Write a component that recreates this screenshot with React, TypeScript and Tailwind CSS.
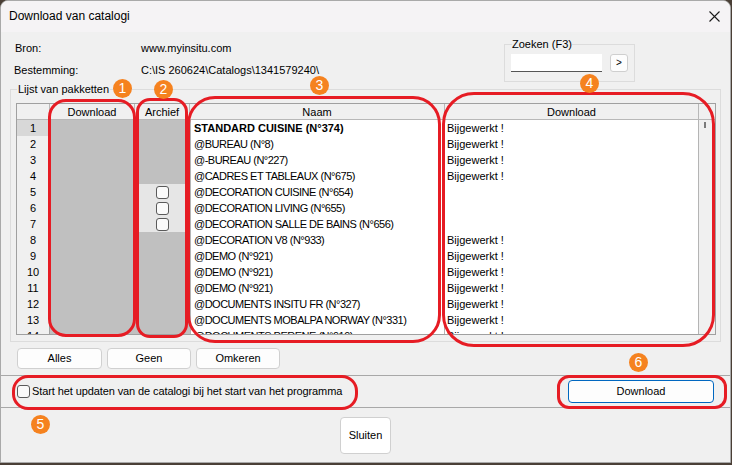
import React from 'react';

interface Pakket {
  name: string;
  bold?: boolean;
  updated: boolean;
  archive?: boolean;
}

const pakketten: Pakket[] = [
  { name: 'STANDARD CUISINE (N°374)', bold: true, updated: true },
  { name: '@BUREAU (N°8)', updated: true },
  { name: '@-BUREAU (N°227)', updated: true },
  { name: '@CADRES ET TABLEAUX (N°675)', updated: true },
  { name: '@DECORATION CUISINE (N°654)', updated: false, archive: true },
  { name: '@DECORATION LIVING (N°655)', updated: false, archive: true },
  { name: '@DECORATION SALLE DE BAINS (N°656)', updated: false, archive: true },
  { name: '@DECORATION V8 (N°933)', updated: true },
  { name: '@DEMO (N°921)', updated: true },
  { name: '@DEMO (N°921)', updated: true },
  { name: '@DEMO (N°921)', updated: true },
  { name: '@DOCUMENTS INSITU FR (N°327)', updated: true },
  { name: '@DOCUMENTS MOBALPA NORWAY (N°331)', updated: true },
  { name: '@DOCUMENTS PERENE (N°919)', updated: true },
];

// rode kaders + oranje nummers (annotaties bovenop de dialoog)
const frames = [
  'left-[48px] top-[99px] w-[88px] h-[238px] rounded-[18px]',
  'left-[136px] top-[98px] w-[52px] h-[240px] rounded-[14px]',
  'left-[187px] top-[96px] w-[254px] h-[247px] rounded-[28px]',
  'left-[442px] top-[92px] w-[273px] h-[255px] rounded-[32px]',
  'left-[12px] top-[375px] w-[346px] h-[35px] rounded-[16px]',
  'left-[557px] top-[375px] w-[170px] h-[34px] rounded-[12px]',
];

const badges = [
  { n: 1, cls: 'left-[113px] top-[79px]' },
  { n: 2, cls: 'left-[154px] top-[80px]' },
  { n: 3, cls: 'left-[310px] top-[76px]' },
  { n: 4, cls: 'left-[580px] top-[74px]' },
  { n: 5, cls: 'left-[31px] top-[415px]' },
  { n: 6, cls: 'left-[629px] top-[353px]' },
];

function WinButton({ label, className = '' }: { label: string; className?: string }) {
  return (
    <button className={`bg-[#fdfdfd] border border-[#d0d0d0] rounded-[4px] text-[11px] text-black flex items-center justify-center ${className}`}>
      {label}
    </button>
  );
}

export default function App() {
  return (
    <div className="relative w-[732px] h-[465px] bg-[#4a3f36] overflow-hidden font-['Liberation_Sans',Arial,sans-serif] text-black">
      <div className="w-[731px] h-[463px] bg-[#f0f0f0] border border-[#a9a9a9] rounded-t-[8px] flex flex-col overflow-hidden">
        {/* titelbalk */}
        <div className="h-[31px] bg-[#f5f3f5] flex items-center justify-between pl-[8px] pr-[9px] shrink-0">
          <span className="text-[12px] -mt-[1px]">Download van catalogi</span>
          <svg width="11" height="11" viewBox="0 0 11 11" className="mr-[1px]">
            <path d="M0.5 0.5 L10.5 10.5 M10.5 0.5 L0.5 10.5" stroke="#1a1a1a" strokeWidth="1.1" />
          </svg>
        </div>

        {/* bron / bestemming + zoeken */}
        <div className="h-[50px] flex shrink-0">
          <div className="pl-[13px] pt-[6px] grid grid-cols-[127px_auto] text-[11px] leading-[21px]">
            <span className="pl-[1px]">Bron:</span>
            <span>www.myinsitu.com</span>
            <span>Bestemming:</span>
            <span>C:\IS 260624\Catalogs\1341579240\</span>
          </div>
          <fieldset className="ml-auto mr-[95px] mt-[5px] w-[131px] h-[45px] border border-[#dcdcdc] pl-[6px]">
            <legend className="ml-[1px] px-0 text-[11px] leading-[14px]">Zoeken (F3)</legend>
            <div className="flex items-center gap-[8px] pt-[3px]">
              <div className="w-[91px] h-[18px] bg-white border-b border-[#555]" />
              <button className="w-[18px] h-[18px] bg-[#fdfdfd] border border-[#cfcfcf] rounded-[3px] text-[10px] leading-none flex items-center justify-center">&gt;</button>
            </div>
          </fieldset>
        </div>

        {/* lijst van pakketten */}
        <fieldset className="mx-[9px] h-[260px] border border-[#dcdcdc] pl-[5px] pr-[4px] shrink-0">
          <legend className="ml-[1px] px-[1px] text-[11px] leading-[14px]">Lijst van pakketten</legend>
          <div className="mt-[7px] h-[232px] border border-[#a0a0a0] bg-[#f0f0f0] overflow-hidden relative">
            <div className="grid grid-cols-[33px_85px_55px_255px_254px_1fr] h-[16px] text-[11px] leading-[17px] text-center border-b border-[#b8b8b8]">
              <div className="border-r border-[#b8b8b8]" />
              <div className="border-r border-[#b8b8b8]">Download</div>
              <div className="border-r border-[#b8b8b8]">Archief</div>
              <div className="border-r border-[#b8b8b8]">Naam</div>
              <div className="border-r border-[#b8b8b8]">Download</div>
              <div />
            </div>
            {pakketten.map((p, i) => (
              <div key={i} className="grid grid-cols-[33px_85px_55px_255px_254px_1fr] h-[16px] text-[11px] leading-[17px]">
                <div className={`text-center border-r border-b border-[#a0a0a0] ${i === 0 ? 'bg-[#d8d8d8]' : 'bg-[#f0f0f0]'}`}>{i + 1}</div>
                <div className={i === 0 ? 'bg-[#c0c0c0] border-b-2 border-r border-[#3c3c3c]' : 'bg-[#c0c0c0]'} />
                <div className={`flex items-center justify-center ${p.archive ? 'bg-[#e6e6e6] border-b border-[#d0d0d0]' : 'bg-[#c0c0c0]'}`}>
                  {p.archive && <div className="w-[13px] h-[13px] rounded-[3px] border border-[#5a5a5a] bg-[#fafafa]" />}
                </div>
                <div className={`bg-white border-l border-r border-b border-[#b4b4b4] pl-[3px] whitespace-nowrap overflow-hidden ${p.bold ? 'font-bold' : 'tracking-[-0.5px]'}`}>
                  {p.name}
                </div>
                <div className="bg-white border-r border-b border-[#b4b4b4] pl-[2px] whitespace-nowrap overflow-hidden">
                  {p.updated ? 'Bijgewerkt !' : ''}
                </div>
                <div />
              </div>
            ))}
            <div className="absolute right-[9px] top-[18px] w-[2px] h-[6px] bg-[#7a7a7a]" />
          </div>
        </fieldset>

        {/* selectie knoppen */}
        <div className="flex gap-[5px] pl-[16px] mt-[6px] shrink-0">
          <WinButton label="Alles" className="w-[85px] h-[21px]" />
          <WinButton label="Geen" className="w-[84px] h-[21px]" />
          <WinButton label="Omkeren" className="w-[84px] h-[21px]" />
        </div>

        {/* opties */}
        <div className="mt-[6px] h-[33px] border-t border-b border-[#a8a8a8] flex items-center pl-[16px] pr-[16px] shrink-0">
          <div className="w-[13px] h-[13px] rounded-[3px] border border-[#5a5a5a] bg-[#fafafa] mr-[2px]" />
          <span className="text-[11px] tracking-[-0.1px]">Start het updaten van de catalogi bij het start van het programma</span>
          <button className="ml-auto w-[146px] h-[23px] bg-[#fdfdfd] border border-[#0067c0] rounded-[4px] text-[11px]">Download</button>
        </div>

        <div className="flex justify-center mt-[9px]">
          <WinButton label="Sluiten" className="w-[51px] h-[37px] bg-white" />
        </div>
      </div>

      {/* annotaties */}
      {frames.map((f, i) => (
        <div key={i} className={`absolute border-[3px] border-[#e61c24] ${f}`} />
      ))}
      {badges.map((b) => (
        <div
          key={b.n}
          className={`absolute w-[19px] h-[19px] rounded-full bg-[#f5821f] text-white text-[14px] leading-[19px] text-center ${b.cls}`}
        >
          {b.n}
        </div>
      ))}
    </div>
  );
}
